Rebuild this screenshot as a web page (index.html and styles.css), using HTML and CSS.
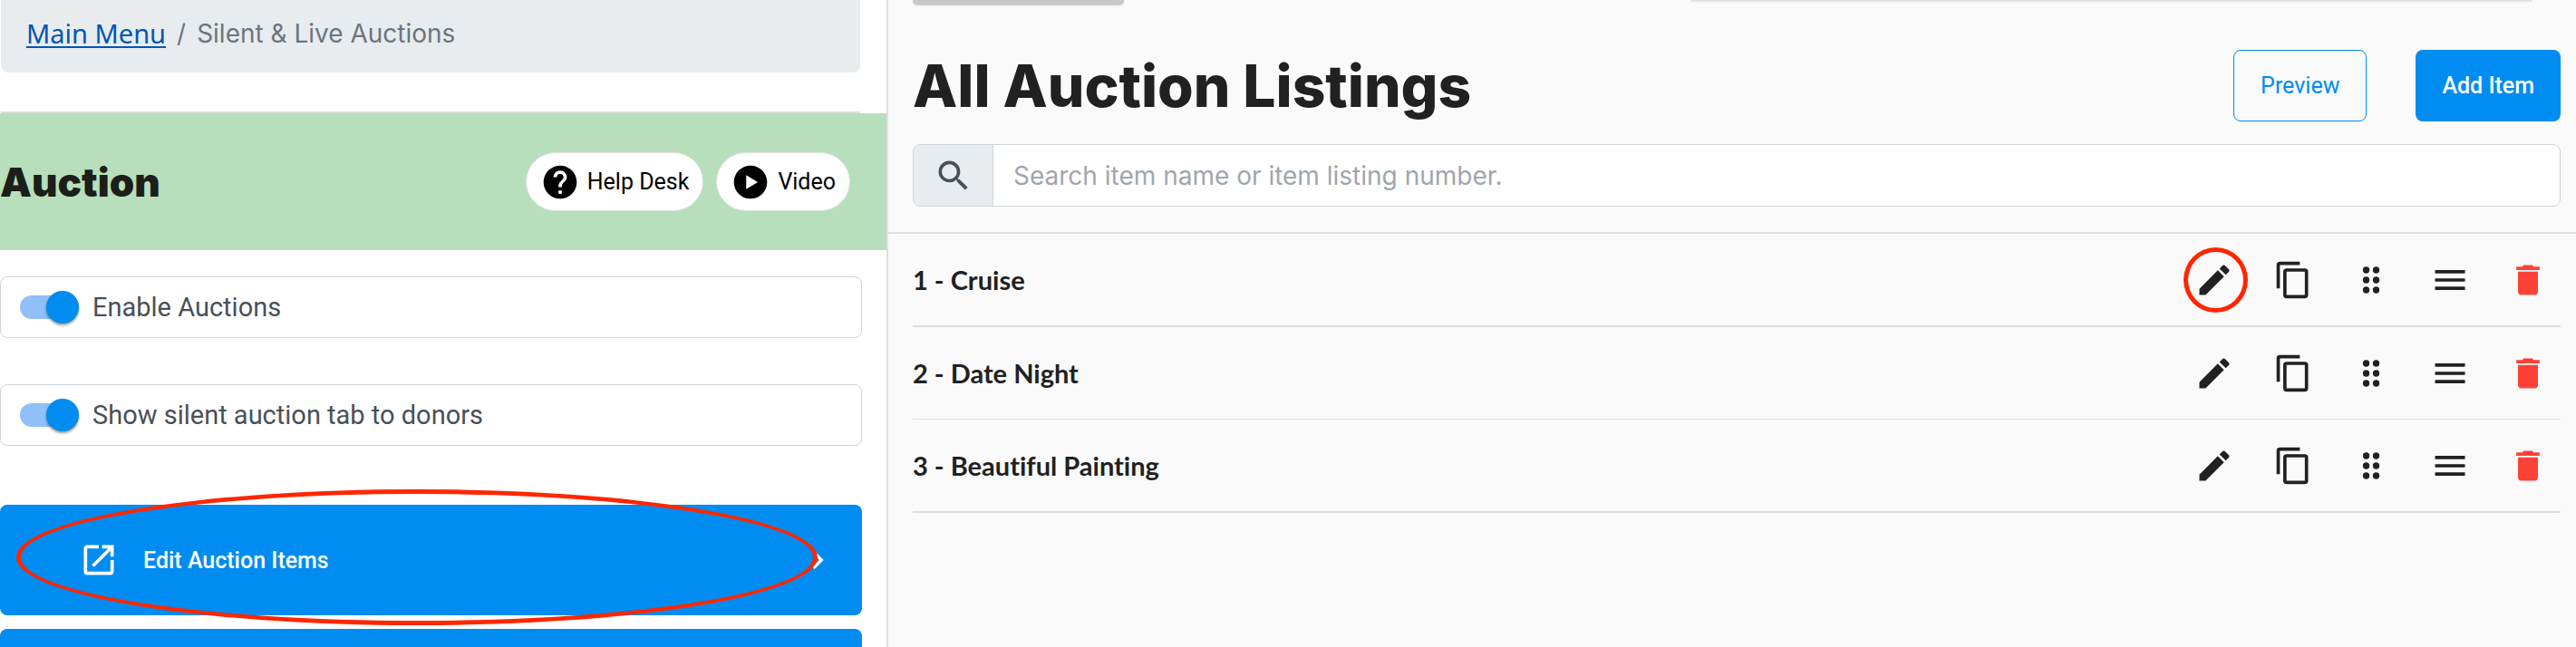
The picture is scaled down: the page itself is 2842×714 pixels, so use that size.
FILE: index.html
```html
<!DOCTYPE html>
<html lang="en">
<head>
<meta charset="utf-8">
<meta name="viewport" content="width=device-width, initial-scale=1">
<title>All Auction Listings</title>
<link rel="stylesheet" href="styles.css">
</head>
<body>
<svg class="sprite" aria-hidden="true">
  <symbol id="i-help" viewBox="0 0 24 24"><path d="M12 2C6.48 2 2 6.48 2 12s4.48 10 10 10 10-4.48 10-10S17.52 2 12 2zm1 17h-2v-2h2v2zm2.070-7.750l-.9.920C13.450 12.900 13 13.500 13 15h-2v-.5c0-1.100.450-2.100 1.170-2.830l1.240-1.260c.370-.360.590-.860.590-1.410 0-1.100-.9-2-2-2s-2 .9-2 2H8c0-2.210 1.790-4 4-4s4 1.790 4 4c0 .880-.360 1.680-.930 2.250z"/></symbol>
  <symbol id="i-play" viewBox="0 0 24 24"><path d="M12 2C6.48 2 2 6.480 2 12s4.480 10 10 10 10-4.480 10-10S17.520 2 12 2zm-2.600 14.200V7.800L16.400 12z"/></symbol>
  <symbol id="i-open" viewBox="0 0 24 24"><path d="M14 3v2h3.590l-9.830 9.830 1.410 1.410L19 6.410V10h2V3m-2 16H5V5h7V3H5c-1.110 0-2 .9-2 2v14a2 2 0 0 0 2 2h14a2 2 0 0 0 2-2v-7h-2v7z"/></symbol>
  <symbol id="i-chevron" viewBox="0 0 24 24"><path d="M8.590 16.580L13.170 12 8.590 7.410 10 6l6 6-6 6z"/></symbol>
  <symbol id="i-search" viewBox="0 0 24 24"><path d="M9.500 3A6.500 6.500 0 0 1 16 9.500c0 1.610-.590 3.090-1.560 4.230l.270.270h.790l5 5-1.500 1.500-5-5v-.790l-.270-.270A6.516 6.516 0 0 1 9.500 16 6.500 6.500 0 0 1 3 9.500 6.500 6.500 0 0 1 9.500 3m0 2C7 5 5 7 5 9.500S7 14 9.500 14 14 12 14 9.500 12 5 9.500 5z"/></symbol>
  <symbol id="i-pencil" viewBox="0 0 24 24"><path d="M20.710 7.040c.390-.390.390-1.040 0-1.410l-2.340-2.340c-.370-.390-1.020-.390-1.410 0l-1.840 1.830 3.750 3.750M3 17.250V21h3.750L17.810 9.930l-3.750-3.750L3 17.250z"/></symbol>
  <symbol id="i-copy" viewBox="0 0 24 24"><path d="M19 21H8V7h11m0-2H8a2 2 0 0 0-2 2v14a2 2 0 0 0 2 2h11a2 2 0 0 0 2-2V7a2 2 0 0 0-2-2m-3-4H4a2 2 0 0 0-2 2v14h2V3h12V1z"/></symbol>
  <symbol id="i-drag" viewBox="0 0 24 24"><circle cx="9" cy="6" r="2"/><circle cx="15" cy="6" r="2"/><circle cx="9" cy="12" r="2"/><circle cx="15" cy="12" r="2"/><circle cx="9" cy="18" r="2"/><circle cx="15" cy="18" r="2"/></symbol>
  <symbol id="i-menu" viewBox="0 0 24 24"><path d="M3 6h18v2H3V6m0 5h18v2H3v-2m0 5h18v2H3v-2z"/></symbol>
  <symbol id="i-trash" viewBox="0 0 24 24"><path d="M19 4h-3.500l-1-1h-5l-1 1H5v2h14M6 19a2 2 0 0 0 2 2h8a2 2 0 0 0 2-2V7H6v12z"/></symbol>
</svg>
<div class="layout">
  <aside class="sidebar">
    <nav class="breadcrumb" aria-label="Breadcrumb">
      <a href="#">Main Menu</a><span>/</span><span>Silent &amp; Live Auctions</span>
    </nav>
    <hr class="rule">
    <header class="banner">
      <h2>Auction</h2>
      <div class="pills">
        <button class="pill" type="button"><svg class="icon"><use href="#i-help"/></svg>Help Desk</button>
        <button class="pill" type="button"><svg class="icon"><use href="#i-play"/></svg>Video</button>
      </div>
    </header>
    <div class="settings">
      <label class="toggle"><input type="checkbox" checked>Enable Auctions</label>
      <label class="toggle"><input type="checkbox" checked>Show silent auction tab to donors</label>
    </div>
    <div class="links">
      <button class="link-button" type="button">
        <svg class="icon"><use href="#i-open"/></svg>
        <span class="link-label">Edit Auction Items</span>
        <svg class="icon chevron"><use href="#i-chevron"/></svg>
        <span class="marker marker-wide"></span>
      </button>
      <button class="link-button" type="button" aria-label="Next section"></button>
    </div>
  </aside>
  <main class="content">
    <div class="top-edge"><span class="edge-button"></span><span class="edge-card"></span></div>
    <header class="title-bar">
      <h1>All Auction Listings</h1>
      <div class="actions">
        <button class="button outline" type="button">Preview</button>
        <button class="button solid" type="button">Add Item</button>
      </div>
    </header>
    <div class="search">
      <label for="q" aria-label="Search"><svg class="icon search-icon"><use href="#i-search"/></svg></label>
      <input id="q" type="text" placeholder="Search item name or item listing number.">
    </div>
    <ul class="listings">
      <li>
        <span>1 - Cruise</span>
        <div class="tools">
          <button type="button" aria-label="Edit"><svg class="icon"><use href="#i-pencil"/></svg><span class="marker marker-round"></span></button>
          <button type="button" aria-label="Copy"><svg class="icon"><use href="#i-copy"/></svg></button>
          <button type="button" aria-label="Drag"><svg class="icon"><use href="#i-drag"/></svg></button>
          <button type="button" aria-label="Menu"><svg class="icon"><use href="#i-menu"/></svg></button>
          <button class="danger" type="button" aria-label="Delete"><svg class="icon"><use href="#i-trash"/></svg></button>
        </div>
      </li>
      <li>
        <span>2 - Date Night</span>
        <div class="tools">
          <button type="button" aria-label="Edit"><svg class="icon"><use href="#i-pencil"/></svg></button>
          <button type="button" aria-label="Copy"><svg class="icon"><use href="#i-copy"/></svg></button>
          <button type="button" aria-label="Drag"><svg class="icon"><use href="#i-drag"/></svg></button>
          <button type="button" aria-label="Menu"><svg class="icon"><use href="#i-menu"/></svg></button>
          <button class="danger" type="button" aria-label="Delete"><svg class="icon"><use href="#i-trash"/></svg></button>
        </div>
      </li>
      <li>
        <span>3 - Beautiful Painting</span>
        <div class="tools">
          <button type="button" aria-label="Edit"><svg class="icon"><use href="#i-pencil"/></svg></button>
          <button type="button" aria-label="Copy"><svg class="icon"><use href="#i-copy"/></svg></button>
          <button type="button" aria-label="Drag"><svg class="icon"><use href="#i-drag"/></svg></button>
          <button type="button" aria-label="Menu"><svg class="icon"><use href="#i-menu"/></svg></button>
          <button class="danger" type="button" aria-label="Delete"><svg class="icon"><use href="#i-trash"/></svg></button>
        </div>
      </li>
    </ul>
  </main>
</div>
</body>
</html>
```
FILE: styles.css
```css
* { box-sizing: border-box; }

body {
  margin: 0;
  background: #fafafa;
  color: #212121;
  font-family: Roboto, "Liberation Sans", sans-serif;
  font-size: 29px;
}

h1, h2 { margin: 0; font-family: Inter, "Liberation Sans", sans-serif; line-height: 1; white-space: nowrap; }
button { font: inherit; color: inherit; border: 0; margin: 0; padding: 0; background: none; cursor: pointer; }

.sprite { display: none; }
.icon { display: block; flex: none; width: 44px; height: 44px; fill: currentColor; }

.layout {
  display: grid;
  grid-template-columns: 980fr 1862fr;
  height: 100vh;
  overflow: hidden;
}

/* Sidebar */
.sidebar { border-right: 2px solid #e0e0e0; background: #fff; }

.breadcrumb {
  display: flex;
  gap: 12px;
  height: 80px;
  margin: 0 29px 0 1px;
  padding: 18px 28px 0;
  border-radius: 0 0 8px 8px;
  background: #e8ecef;
  color: #6c757d;
  font-family: Inter, "Liberation Sans", sans-serif;
  font-size: 28px;
  line-height: 38px;
}
.breadcrumb a {
  color: #0056b3;
  font-family: "Noto Sans", "Liberation Sans", sans-serif;
  font-size: 29px;
  text-decoration-thickness: 2px;
  text-underline-offset: 3px;
}

.rule { height: 2px; margin: 43px 29px 0 1px; border: 0; background: #ddd; }

.banner {
  display: flex;
  align-items: center;
  justify-content: space-between;
  height: 151px;
  padding-right: 40px;
  background: #b7dfbb;
  color: #1b1f19;
}
.banner h2 { font-size: 44px; font-weight: 900; }
.pills { display: flex; gap: 14px; }
.pill {
  display: flex;
  align-items: center;
  gap: 8px;
  height: 65px;
  padding: 0 15px;
  border: 1px solid #e0e0e0;
  border-radius: 33px;
  background: #fff;
  color: #000;
  font-size: 25px;
}

.settings { display: grid; gap: 51px; margin: 29px 27px 0 0; }
.toggle {
  display: flex;
  align-items: center;
  gap: 15px;
  height: 68px;
  padding-left: 21px;
  border: 1px solid #ced4da;
  border-radius: 8px;
  color: #495057;
}
.toggle input {
  appearance: none;
  display: flex;
  align-items: center;
  justify-content: flex-end;
  width: 65px;
  height: 26px;
  margin: 0;
  border-radius: 13px;
  background: #8fc0f8;
}
.toggle input::after {
  content: "";
  flex: none;
  width: 36px;
  height: 36px;
  border-radius: 50%;
  background: #008cf0;
  box-shadow: 0 2px 3px #0006;
}

.links { display: grid; gap: 15px; margin: 65px 27px 0 0; }
.link-button {
  position: relative;
  display: flex;
  align-items: center;
  height: 122px;
  padding: 0 29px 0 87px;
  border-radius: 8px;
  background: #008cf0;
  color: #fff;
  font-size: 25px;
  font-weight: 500;
}
.link-label { flex: 1; margin-left: 27px; text-align: left; }
.chevron { width: 40px; height: 40px; }

/* Hand-drawn highlight rings */
.marker { position: absolute; border: 5px solid #ff2600; border-radius: 50%; pointer-events: none; }
.marker-wide { inset: -17px 49px -11px 18px; }
.marker-round { inset: -14px -15px -14px -12px; }

/* Listings */
.top-edge {
  display: flex;
  justify-content: space-between;
  height: 0;
  padding: 0 48px 0 27px;
}
.edge-button { width: 233px; height: 5px; border-radius: 0 0 10px 10px; background: #c8c8c8; box-shadow: 0 1px 2px #0003; }
.edge-card { width: 52%; height: 1px; border-radius: 0 0 4px 4px; background: #ddd; box-shadow: 0 1px 2px #0002; }

.title-bar {
  display: flex;
  align-items: center;
  justify-content: space-between;
  margin: 55px 17px 25px 27px;
}
.title-bar h1 { font-size: 64px; font-weight: 800; }
.actions { display: flex; gap: 54px; }
.button { height: 79px; padding: 0 29px; border-radius: 8px; font-size: 25px; }
.outline { border: 1px solid #008cf0; color: #008cf0; }
.solid { background: #008cf0; color: #fff; font-weight: 500; }

.search {
  display: flex;
  height: 69px;
  margin: 0 17px 28px 27px;
  overflow: hidden;
  border: 1px solid #ced4da;
  border-radius: 8px;
  background: #fff;
}
.search label {
  display: flex;
  align-items: center;
  justify-content: center;
  width: 88px;
  border-right: 1px solid #ced4da;
  background: #e8ecef;
  color: #495057;
}
.search input {
  flex: 1;
  min-width: 0;
  padding: 0 22px;
  border: 0;
  outline: 0;
  background: none;
  color: #495057;
  font-family: Inter, "Liberation Sans", sans-serif;
  font-size: 28px;
}
.search input::placeholder { color: #9fa6ad; opacity: 1; }

.listings {
  margin: 0;
  padding: 0 17px 0 27px;
  border-top: 2px solid #ddd;
  list-style: none;
}
.listings li {
  display: flex;
  align-items: center;
  justify-content: space-between;
  height: 103px;
  padding-right: 14px;
  border-bottom: 2px solid #ddd;
  font-family: Lato, "Liberation Sans", sans-serif;
  font-size: 29px;
  font-weight: 700;
  font-variant-ligatures: none;
}
.listings li:nth-child(2) { height: 102px; border-bottom-width: 1px; }
.tools { display: flex; justify-content: space-between; width: 390px; }
.tools button { position: relative; }
.danger { color: #fc4236; }
```
